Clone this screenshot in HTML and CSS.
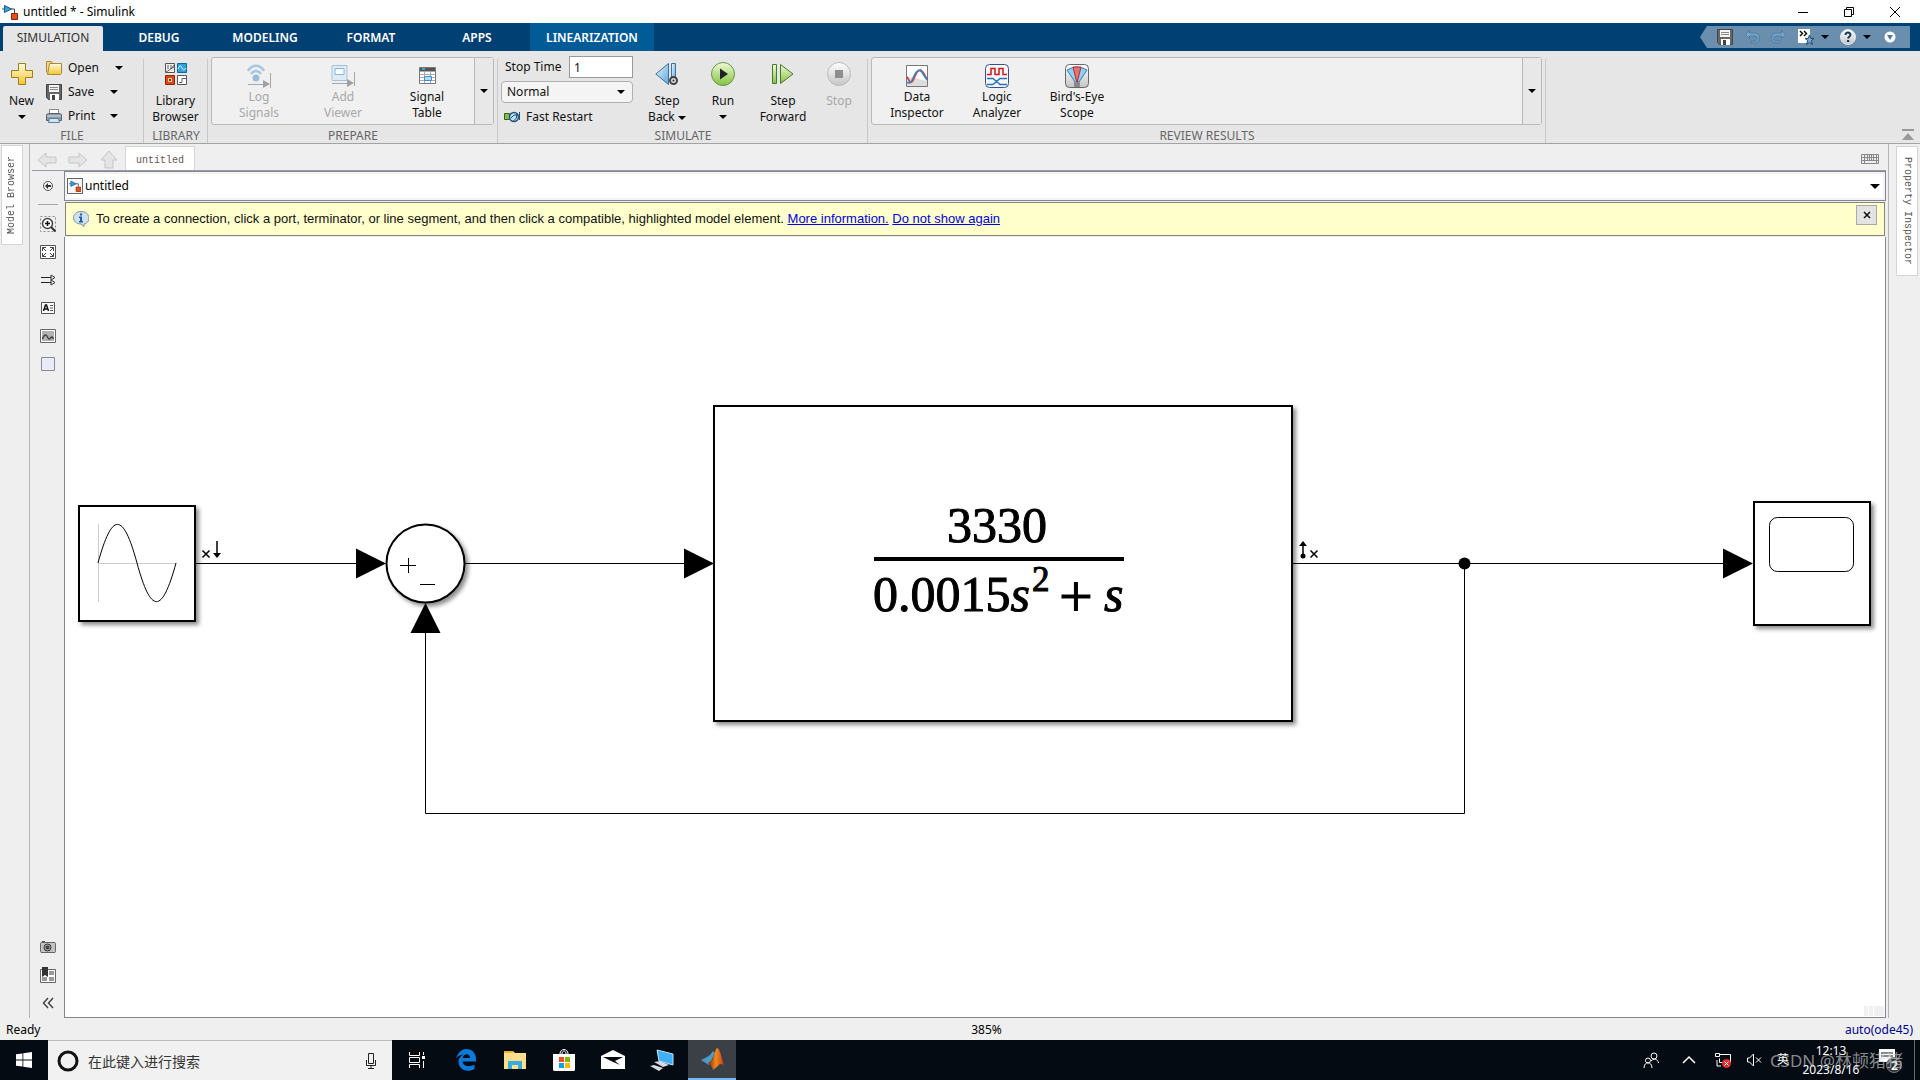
FILE: index.html
```html
<!DOCTYPE html>
<html lang="en">
<head>
<meta charset="utf-8">
<title>untitled * - Simulink</title>
<link rel="stylesheet" href="styles.css">
</head>
<body>
<svg class="defs" aria-hidden="true">
  <defs>
    <linearGradient id="gold" x1="0" y1="0" x2="0" y2="1"><stop offset="0" stop-color="#fffbe0"/><stop offset="1" stop-color="#f2c52c"/></linearGradient>
    <linearGradient id="green" x1="0" y1="0" x2="0" y2="1"><stop offset="0" stop-color="#eef9d6"/><stop offset="1" stop-color="#84c341"/></linearGradient>
    <linearGradient id="blue" x1="0" y1="0" x2="1" y2="1"><stop offset="0" stop-color="#e6f5fd"/><stop offset="1" stop-color="#5fa7d8"/></linearGradient>
    <linearGradient id="grey" x1="0" y1="0" x2="0" y2="1"><stop offset="0" stop-color="#ffffff"/><stop offset="1" stop-color="#c4c4c4"/></linearGradient>
    <linearGradient id="flame" x1="0" y1="0" x2="1" y2="0"><stop offset="0" stop-color="#7c2512"/><stop offset=".5" stop-color="#f28a1c"/><stop offset="1" stop-color="#c23a15"/></linearGradient>
    <symbol id="model" viewBox="0 0 16 16">
      <path d="M0 5h2M9 5h3.500v4" stroke="#444" fill="none"/>
      <path d="M2.500 1.500v7l7-3.500z" fill="#35a0dc" stroke="#135d92"/>
      <path d="M9.500 9.500h6v6h-6z" fill="#e2501f" stroke="#8c2506"/>
    </symbol>
    <symbol id="floppy" viewBox="0 0 16 16">
      <path d="M.5.5h15v15h-13l-2-2z" fill="#666" stroke="#444"/>
      <path d="M3 1h10v7H3z" fill="#f4f4f4"/><path d="M4 3.500h8M4 5.500h8" stroke="#888"/>
      <path d="M4 10h9v6H4z" fill="#fff"/><path d="M6 11h3v5H6z" fill="#444"/>
    </symbol>
  </defs>
</svg>

<header class="titlebar">
  <svg class="ic16" viewBox="0 0 16 16"><use href="#model"/></svg>
  <h1 class="title">untitled * - Simulink</h1>
  <div class="window-controls">
    <button aria-label="Minimize"><svg width="12" height="12"><path d="M1 6.500h10" stroke="#000"/></svg></button>
    <button aria-label="Restore"><svg width="12" height="12"><path d="M1.500 3.500h7v7h-7zM3.500 3V1.500h7v7H9" stroke="#000" fill="none"/></svg></button>
    <button aria-label="Close"><svg width="12" height="12"><path d="M1 1l10 10M11 1L1 11" stroke="#000"/></svg></button>
  </div>
</header>

<nav class="tabs">
  <button class="tab active">SIMULATION</button>
  <button class="tab">DEBUG</button>
  <button class="tab">MODELING</button>
  <button class="tab">FORMAT</button>
  <button class="tab">APPS</button>
  <button class="tab context">LINEARIZATION</button>
  <div class="quick">
    <button aria-label="Save"><svg class="ic16"><use href="#floppy"/></svg></button>
    <button aria-label="Undo"><svg class="ic16" viewBox="0 0 16 16"><path d="M5.500 1.500L1.500 5.500l4 4V7H11c3 0 3 5 0 5H7v2h4c6 0 6-10 0-10H5.500z" fill="#7ba3c3" stroke="#4c7ea6"/></svg></button>
    <button aria-label="Redo"><svg class="ic16" viewBox="0 0 16 16"><path d="M10.500 1.500l4 4-4 4V7H5c-3 0-3 5 0 5h4v2H5c-6 0-6-10 0-10h5.500z" fill="#7ba3c3" stroke="#4c7ea6"/></svg></button>
    <button class="with-caret" aria-label="Favorites"><svg class="ic16" viewBox="0 0 16 16"><path d="M0 0h12v14H0z" fill="#fff"/><path d="M2 2l2.500 2.500L2 7M6 2l2.500 2.500L6 7" stroke="#111" stroke-width="1.500" fill="none"/><path d="M11.500 6l1.300 3.400H16l-2.600 2.200 1 3.900-2.900-2.200-2.900 2.200 1-3.900L7 9.400h3.200z" fill="#7da7cd" stroke="#24496e"/></svg><i class="caret"></i></button>
    <button class="with-caret" aria-label="Help"><svg class="ic16" viewBox="0 0 16 16"><circle cx="8" cy="8" r="7.500" fill="url(#grey)" stroke="#dfe9f2"/><path d="M5.500 6c0-3.500 5.200-3 5 0-.1 1.500-2.400 1.600-2.400 3.600" fill="none" stroke="#16365a" stroke-width="2"/><path d="M7 11h2.200v2H7z" fill="#16365a"/></svg><i class="caret"></i></button>
    <button aria-label="Customize"><svg class="ic16" viewBox="0 0 16 16"><circle cx="8" cy="8" r="5.500" fill="#fff"/><path d="M5 6h6l-3 5z" fill="#4a7ba3"/></svg></button>
  </div>
</nav>

<div class="ribbon">
  <section class="group file">
    <div class="group-body">
      <button class="big new">
        <svg class="ic22" viewBox="0 0 22 22"><path d="M7.500.5h7v7h7v7h-7v7h-7v-7h-7v-7h7z" fill="url(#gold)" stroke="#a07d1a"/></svg>
        <span>New</span><i class="caret"></i>
      </button>
      <div class="file-list">
        <button class="row"><svg class="ic16" viewBox="0 0 16 16"><path d="M.5 12.500v-11h5l1 2h8v1" fill="#f2dc85" stroke="#a88a3a"/><path d="M3.500 3.500h12v10l-1 1h-13z" fill="url(#gold)" stroke="#a88a3a"/></svg><span>Open</span><i class="caret wide"></i></button>
        <button class="row"><svg class="ic16"><use href="#floppy"/></svg><span>Save</span><i class="caret"></i></button>
        <button class="row"><svg class="ic16" viewBox="0 0 16 16"><path d="M3.500 6V1.500h9V6" fill="#fff" stroke="#888"/><path d="M.5 6.500l2-1h11l2 1v6H.5z" fill="#8b98a6" stroke="#56606b"/><path d="M1 8h14" stroke="#dfe5ea"/><path d="M3.500 10.500h9l1 4h-11z" fill="#cfe6f6" stroke="#5c7f9c"/></svg><span>Print</span><i class="caret"></i></button>
      </div>
    </div>
    <h2>FILE</h2>
  </section>

  <section class="group library">
    <div class="group-body">
      <button class="big">
        <svg class="ic22" viewBox="0 0 22 22"><path d="M.5.5h9v9h-9z" fill="#eee" stroke="#555"/><path d="M3 2v4M6 2v4l3-4M1 9l8-5" stroke="#666" fill="none"/><path d="M12.500.5h9v9h-9z" fill="#2ba3dc" stroke="#12689b"/><path d="M13 6c2-5 3-3 4-1s2 3 4 0" stroke="#fff" fill="none"/><path d="M.5 12.500h9v9h-9z" fill="#d9491a" stroke="#8c2506"/><path d="M3.500 15.500h3v3h-3z" stroke="#ffd9b0" fill="#8c2506"/><path d="M12.500 12.500h9v9h-9z" fill="#fff" stroke="#555"/><path d="M14 19.500h3v-4h4" stroke="#666" fill="none"/></svg>
        <span>Library<br>Browser</span>
      </button>
    </div>
    <h2>LIBRARY</h2>
  </section>

  <section class="group prepare">
    <div class="group-body">
      <div class="gallery">
        <div class="gallery-items">
          <button class="item" disabled><svg class="ic24" viewBox="0 0 24 24"><g fill="none" stroke="#9fc4e0" stroke-width="2.500"><path d="M1 7c4-7 12-7 16 0M4 10c3-4 7-4 10 0"/></g><circle cx="9" cy="14" r="3.500" fill="#8fb8da"/><path d="M1 20.500h18M23.500 9v15" stroke="#a0a0a0"/><path d="M16 16l7 4-7 4z" fill="#999"/></svg><span>Log<br>Signals</span></button>
          <button class="item" disabled><svg class="ic24" viewBox="0 0 24 24"><path d="M1 1.500h15v15H1z" fill="#dcebf6" stroke="#a5bdd2"/><path d="M4 4.500h9v6H4z" fill="#fff" stroke="#7fafda"/><path d="M1 19.500h18M23.500 8v14" stroke="#a0a0a0"/><path d="M16 15l7 4-7 4z" fill="#999"/></svg><span>Add<br>Viewer</span></button>
          <button class="item"><svg class="ic24" viewBox="0 0 24 24"><path d="M4.500 3.500h16v16h-16z" fill="#fff" stroke="#777"/><path d="M5 4h15v3.500H5z" fill="#555"/><path d="M7 4h3v2H7z" fill="#3ba0e8"/><path d="M5 10.500h15M5 13.500h15M5 16.500h15M9.500 8v11M15.500 8v11" stroke="#aaa"/><path d="M9.500 12.500h7v4h-7z" fill="#b4dcf8" stroke="#3d8dd0"/></svg><span>Signal<br>Table</span></button>
        </div>
        <button class="gallery-more" aria-label="More apps"><i class="caret"></i></button>
      </div>
    </div>
    <h2>PREPARE</h2>
  </section>

  <section class="group simulate">
    <div class="group-body">
      <div class="sim-form">
        <div class="field"><label for="stop">Stop Time</label><input id="stop" type="text" value="1"></div>
        <div class="select-wrap"><select aria-label="Simulation mode"><option>Normal</option></select><i class="caret"></i></div>
        <button class="fast"><svg class="ic16" viewBox="0 0 16 16"><path d="M.5 4.500h5v6h-5z" fill="#7cc142" stroke="#3b5b25"/><circle cx="10" cy="8" r="4.500" fill="#bfe0f4" stroke="#23527a" stroke-width="1.500"/><path d="M15.500 3v8M12.500 5v4l-3 3M7 9l3-3h4" stroke="#23527a" fill="none"/></svg><span>Fast Restart</span></button>
      </div>
      <button class="big step"><svg class="ic24" viewBox="0 0 24 24"><path d="M13.500 1.500v21L.8 12z" fill="url(#blue)" stroke="#3d709c"/><path d="M16.500 1.500h4v18h-4z" fill="url(#blue)" stroke="#3d709c"/><circle cx="18.500" cy="18.500" r="3.500" fill="#ddd" stroke="#444" stroke-width="2"/><circle cx="18.500" cy="18.500" r="1" fill="#333"/></svg><span>Step<br>Back <i class="caret mid"></i></span></button>
      <button class="big run"><svg class="ic24" viewBox="0 0 24 24"><circle cx="12" cy="12" r="11.500" fill="url(#green)" stroke="#6a9444"/><path d="M9 6.500v11l8-5.500z" fill="#222"/></svg><span>Run</span><i class="caret"></i></button>
      <button class="big forward"><svg class="ic24" viewBox="0 0 24 24"><path d="M1.500 2.500h4v19h-4z" fill="url(#green)" stroke="#477a2a"/><path d="M9.500 2.500v19L22 12z" fill="url(#green)" stroke="#477a2a"/></svg><span>Step<br>Forward</span></button>
      <button class="big stop" disabled><svg class="ic24" viewBox="0 0 24 24"><circle cx="12" cy="12" r="11.500" fill="url(#grey)" stroke="#bbb"/><path d="M8 8h8v8H8z" fill="#8e8e8e"/></svg><span>Stop</span></button>
    </div>
    <h2>SIMULATE</h2>
  </section>

  <section class="group review">
    <div class="group-body">
      <div class="gallery">
        <div class="gallery-items">
          <button class="item"><svg class="ic24" viewBox="0 0 24 24"><path d="M1.500 1.500h21v21h-21z" fill="#fff" stroke="#777"/><path d="M2 22V12l20 5v5z" fill="#ddd"/><path d="M2 13l3 5c4 3 5-12 10-12 3 0 4 4 7 9" stroke="#d8352a" stroke-width="1.500" fill="none"/><path d="M2 18c3 3 5-1 7-6 3-6 6-8 9-2l4 6" stroke="#2f88c9" stroke-width="1.500" fill="none"/></svg><span>Data<br>Inspector</span></button>
          <button class="item"><svg class="ic24" viewBox="0 0 24 24"><rect x=".5" y=".5" width="23" height="23" rx="4" fill="#f6f7fb" stroke="#3b4f86"/><path d="M2 10.500h4v-6h4v6h4v-6h4v6h4" stroke="#d01818" stroke-width="1.500" fill="none"/><path d="M2 14.500h6l7 6h7M2 20.500h6l7-6h7" stroke="#2675b8" stroke-width="1.500" fill="none"/></svg><span>Logic<br>Analyzer</span></button>
          <button class="item"><svg class="ic24" viewBox="0 0 24 24"><rect x=".5" y=".5" width="23" height="23" rx="4" fill="url(#grey)" stroke="#666"/><path d="M2 6q10-6 20 0l-8 12h-4z" fill="#8fd0f2" stroke="#2f7fb5"/><path d="M8 3h8l-4 16z" fill="#d77" stroke="#c22"/><rect x="9" y="18" width="6" height="5" rx="1" fill="#888"/></svg><span>Bird's-Eye<br>Scope</span></button>
        </div>
        <button class="gallery-more" aria-label="More results"><i class="caret"></i></button>
      </div>
    </div>
    <h2>REVIEW RESULTS</h2>
  </section>
  <button class="collapse" aria-label="Collapse toolstrip"><svg width="12" height="12"><path d="M0 0h12v2H0zM6 4l6 7H0z" fill="#999"/></svg></button>
</div>

<main class="workspace">
  <aside class="dock left"><button class="dock-tab flip">Model Browser</button></aside>
  <div class="editor">
    <div class="doc-tabs">
      <div class="navs">
        <button class="nav" aria-label="Back"><svg width="20" height="18"><path d="M1 9l8-7v4h10v6H9v4z" fill="#e4e4e4" stroke="#c6c6c6"/></svg></button>
        <button class="nav" aria-label="Forward"><svg width="20" height="18"><path d="M19 9l-8-7v4H1v6h10v4z" fill="#e4e4e4" stroke="#c6c6c6"/></svg></button>
        <button class="nav" aria-label="Up"><svg width="20" height="18"><path d="M10 0l8 9h-4v8H6V9H2z" fill="#e4e4e4" stroke="#c6c6c6"/></svg></button>
      </div>
      <button class="doc-tab">untitled</button>
      <button class="keyboard" aria-label="Shortcuts"><svg width="18" height="10"><path d="M.5.5h17v9H.5zM0 3.500h18M0 6.500h18M3.500 0v9M6.500 0v6M8.500 0v6M10.500 0v6M12.500 0v6M15.500 0v9" stroke="#888" fill="#eee"/></svg></button>
    </div>
    <div class="editor-body">
      <div class="palette">
        <button aria-label="Hide browser"><svg class="ic16" viewBox="0 0 16 16"><circle cx="8" cy="8" r="4.500" fill="#f6f6f6" stroke="#555"/><path d="M5 8l3-3v2h3v2H8v2z" fill="#333"/></svg></button>
        <hr>
        <button aria-label="Zoom"><svg class="ic16" viewBox="0 0 16 16"><path d="M.5.5h15v15H.5z" fill="none" stroke="#888" stroke-dasharray="2 2"/><circle cx="7.500" cy="7.500" r="5" fill="#fff" stroke="#444" stroke-width="1.500"/><path d="M5 7.500h5M7.500 5v5" stroke="#111" stroke-width="1.500"/><path d="M11 11l4.500 4.500" stroke="#333" stroke-width="2"/></svg></button>
        <button aria-label="Fit to view"><svg class="ic16" viewBox="0 0 16 16"><path d="M.5 1.500h15v13H.5z" fill="#fff" stroke="#555"/><path d="M6 3.500H2.500V7M10 3.500h3.500V7M6 12.500H2.500V9M10 12.500h3.500V9M2.500 3.500L6 7M13.500 3.500L10 7M2.500 12.500L6 9M13.500 12.500L10 9" fill="none" stroke="#444"/></svg></button>
        <button aria-label="Sample time"><svg class="ic16" viewBox="0 0 16 16"><path d="M1 5.500h11M1 10.500h11" stroke="#222"/><path d="M11 3l4 2.500L11 8zM11 8l4 2.500-4 2.500z" fill="#eee" stroke="#333"/></svg></button>
        <button aria-label="Annotation"><svg class="ic16" viewBox="0 0 16 16"><path d="M1.500 2.500h13v11h-13z" fill="#fff" stroke="#555"/><path d="M3.500 11l2-6h1l2 6M4 9h4" fill="none" stroke="#111" stroke-width="1.500"/><path d="M10 5.500h3M10 8h3M10 10.500h3" stroke="#555"/></svg></button>
        <button aria-label="Image"><svg class="ic16" viewBox="0 0 16 16"><path d="M.5 1.500h15v13H.5z" fill="#fff" stroke="#666"/><path d="M2 3h12v10H2z" fill="#b2b2b2"/><path d="M2.500 11c2-6 4-4 5-2s2 3 3 1 2-1 3 1" fill="none" stroke="#444" stroke-width="1.500"/></svg></button>
        <button aria-label="Area"><svg class="ic16" viewBox="0 0 16 16"><path d="M1.500 1.500h13v13h-13z" fill="#eaeaf8" stroke="#8a8a96"/></svg></button>
        <div class="palette-gap"></div>
        <button aria-label="Screenshot"><svg class="ic16" viewBox="0 0 16 16"><path d="M1 3.500h14l.5 1v8l-.5 1H1l-.5-1v-8z" fill="#c4c4c4" stroke="#666"/><path d="M2 2.500h3" stroke="#555"/><circle cx="7.500" cy="8.500" r="3.500" fill="#aaa" stroke="#333"/><circle cx="7.500" cy="8.500" r="2" fill="#444"/></svg></button>
        <button aria-label="Bookmarks"><svg class="ic16" viewBox="0 0 16 16"><path d="M.5 2.500h15v13H.5z" fill="#fff" stroke="#666"/><path d="M9 4h5v4H9zM9 10h5v4H9zM2 10h5v4H2z" fill="#999"/><path d="M2 0h6v10L5 8l-3 2z" fill="#333"/></svg></button>
        <button aria-label="Collapse"><svg class="ic16" viewBox="0 0 16 16"><path d="M8 3L3.500 8 8 13M13 3L8.500 8l4.500 5" fill="none" stroke="#444" stroke-width="1.500"/></svg></button>
      </div>
      <div class="pane">
        <div class="address">
          <button class="crumb"><span class="crumb-icon"><svg width="12" height="12" viewBox="0 0 16 16"><use href="#model"/></svg></span>untitled</button>
          <button class="drop" aria-label="Open path list"><i class="caret"></i></button>
        </div>
        <div class="notice">
          <svg class="ic16" viewBox="0 0 16 16"><path d="M8 .5c10 0 10 11.500 3 12.500v2.500L8 13C-2 13-2 .5 8 .5z" fill="#cfe0ee" stroke="#7f93a6"/><path d="M7 2.500h2v2H7zM6 5.500h3V10h1v1.500H6V10h1V7H6z" fill="#1d5e9c"/></svg>
          <p>To create a connection, click a port, terminator, or line segment, and then click a compatible, highlighted model element. <a href="#">More information.</a> <a href="#">Do not show again</a></p>
          <button class="dismiss" aria-label="Dismiss"><svg width="8" height="8"><path d="M1 1l6 6M7 1L1 7" stroke="#111" stroke-width="1.500"/></svg></button>
        </div>
        <div class="canvas">
          <svg class="diagram">
            <g transform="translate(-65 -237)">
              <g class="wire">
                <path d="M196 563.500h160M465 563.500h219M1293 563.500h430M1464.500 563.500v250H425.500V633"/>
              </g>
              <path d="M356 548.500v30l30-15zM684 548.500v30l30-15zM1723 548.500v30l30-15zM410.500 633h30l-15-30z"/>
              <circle cx="1464.500" cy="563.500" r="6"/>

              <rect class="block" x="79" y="506" width="116" height="115"/>
              <path d="M98.500 524v78M98 563.500h78" stroke="#ccc"/>
              <path d="M98 563C112 511.500 123 511.500 137 563S162 614.500 176 563" class="thin"/>
              <path d="M202.500 550.500l7 7M209.500 550.500l-7 7M217 541v14" class="mark"/>
              <path d="M213 553h8l-4 5z"/>

              <circle class="block" cx="425.500" cy="563.500" r="39"/>
              <path d="M400 565.500h16M408.500 558v15M420 584.500h15" class="thin"/>

              <rect class="block" x="714" y="406" width="578" height="315"/>
              <path d="M874 559h250" stroke="#000" stroke-width="4"/>
              <g class="formula">
                <text x="947" y="542">3330</text>
                <text x="873" y="611">0.0015<tspan class="var">s</tspan></text>
                <text class="power" x="1032" y="591">2</text>
                <text class="plus" x="1059" y="616">+</text>
                <text class="var" x="1104" y="611">s</text>
              </g>
              <path d="M1303 545v10M1310.500 550.500l7 7M1317.500 550.500l-7 7" class="mark"/>
              <path d="M1299 546h8l-4-5z"/><circle cx="1303" cy="556" r="2.500"/>

              <rect class="block" x="1754" y="502" width="116" height="123"/>
              <rect class="screen" x="1769.500" y="517.500" width="84" height="54" rx="8"/>
            </g>
          </svg>
          <div class="grips"><i></i><i></i><i></i></div>
        </div>
      </div>
    </div>
  </div>
  <aside class="dock right"><button class="dock-tab">Property Inspector</button></aside>
</main>

<footer class="status"><span>Ready</span><span class="zoom">385%</span><a href="#" class="solver">auto(ode45)</a></footer>

<div class="taskbar">
  <button class="start" aria-label="Start"><svg class="ic16" viewBox="0 0 16 16"><path d="M0 2.300l6.500-.9v6.100H0zM7.300 1.300L16 0v7.500H7.300zM0 8.400h6.500v6.200L0 13.700zM7.300 8.400H16V16l-8.700-1.300z" fill="#fff"/></svg></button>
  <div class="search">
    <svg width="22" height="22"><circle cx="11" cy="11" r="9" fill="none" stroke="#111" stroke-width="3"/></svg>
    <input type="text" aria-label="搜索" placeholder="在此键入进行搜索">
    <svg width="12" height="18"><path d="M3.500 1.500h5v10h-5zM1.500 8v5.500h9V8M6 13.500v3M3 16.500h6" fill="none" stroke="#222"/></svg>
  </div>
  <div class="apps">
    <button aria-label="Task view"><svg class="ic24" viewBox="0 0 24 24"><path d="M4.500 4v3.500h10V4M4.500 20v-3.500h10V20M4.500 9.500h10v5h-10zM18.500 4v3M18.500 13v7" fill="none" stroke="#fff"/><path d="M17 8h3v3h-3z" fill="#fff"/></svg></button>
    <button aria-label="Edge"><svg class="ic24" viewBox="0 0 24 24"><path d="M2 11C4 4 8 1 12.500 1 18 1 22 5 22 11v2.500H8.500c.5 5 7.500 6 12 3V21c-7 4-16 1-16-7.500 0-3 2-5.500 5-7C5 7 3 9 2 11zM8.700 10H16c0-5-6.500-5-7.300 0z" fill="#0a7bdc"/></svg></button>
    <button aria-label="Explorer"><svg class="ic24" viewBox="0 0 24 24"><path d="M1 3h9l2 2h11v16H1z" fill="#ffe08a"/><path d="M1 3h9v2H1z" fill="#f0b429"/><path d="M5 21v-8h14v8h-4v-4H9v4z" fill="#3aabe0"/></svg></button>
    <button aria-label="Store"><svg class="ic24" viewBox="0 0 24 24"><path d="M8 6c0-6 8-6 8 0M10 6c0-4 4-4 4 0" fill="none" stroke="#fff"/><path d="M1 6h22v16l-1 1H2l-1-1z" fill="#fff"/><path d="M7 9h5v5H7z" fill="#f25022"/><path d="M13 9h5v5h-5z" fill="#7fba00"/><path d="M7 15h5v5H7z" fill="#00a4ef"/><path d="M13 15h5v5h-5z" fill="#ffb900"/></svg></button>
    <button aria-label="Mail"><svg class="ic24" viewBox="0 0 24 24"><path d="M0 8l12-6 12 6v13H0z" fill="#fff"/><path d="M2 9h20l-8 4 5 4-9-4z" fill="#050b12"/></svg></button>
    <button aria-label="Computer"><svg class="ic24" viewBox="0 0 24 24"><path d="M7 2l16 4v11L9 13z" fill="#3fb0f5" stroke="#bfe3f7"/><path d="M4 14l6-1 9 4-6 2zM0 18l4-1 9 3-4 3z" fill="#d5dbe0"/></svg></button>
    <button class="running" aria-label="MATLAB"><svg class="ic24" viewBox="0 0 24 24"><path d="M1 13l6-3 3-2 3-4 2 2-6 12z" fill="#4b9ac7"/><path d="M8 16l4-3c2-3 3-11 5-12 3 0 4 9 7 17-3-2-5-1-6 1l-5 4c-1-4-3-6-5-7z" fill="url(#flame)"/></svg></button>
  </div>
  <div class="tray">
    <button class="people" aria-label="People"><svg class="ic16" viewBox="0 0 16 16"><g fill="none" stroke="#fff"><circle cx="11" cy="4" r="3"/><circle cx="5" cy="8.500" r="2.500"/><path d="M1 16c0-7 8-7 8 0M8 9c3-3 7-2 7.500 2"/></g></svg></button>
    <button class="more" aria-label="Hidden icons"><svg class="ic16" viewBox="0 0 16 16"><path d="M2 11l6-6 6 6" fill="none" stroke="#fff" stroke-width="1.500"/></svg></button>
    <button class="net" aria-label="Network"><svg class="ic16" viewBox="0 0 16 16"><path d="M2 8v6h4M5 2.500h10.500v8H4.500v-4M.5 1.500h4v3h-4z" fill="none" stroke="#fff"/><circle cx="11.500" cy="11.500" r="4.500" fill="#e02b2b"/><path d="M9.500 9.500l4 4M13.500 9.500l-4 4" stroke="#fff"/></svg></button>
    <button class="vol" aria-label="Volume"><svg class="ic16" viewBox="0 0 16 16"><path d="M1.500 6h2l4-4v12l-4-4h-2zM10 5.500l5 5M15 5.500l-5 5" fill="none" stroke="#fff"/></svg></button>
    <button class="ime">英</button>
    <time class="clock">12:13<br>2023/8/16</time>
    <button class="inbox" aria-label="Notifications"><svg width="24" height="26"><path d="M1 2h16v13h-4v3l-4-3H1z" fill="#fff"/><path d="M3 6h12M3 9h12" stroke="#050b12"/><circle cx="16" cy="18" r="7.500" fill="#2f3338" stroke="#777"/><text x="13" y="23" class="count">2</text></svg></button>
    <span class="watermark">CSDN @林顿猪猪</span>
  </div>
</div>
</body>
</html>
```
FILE: styles.css
```css
* { box-sizing: border-box; }
body {
  margin: 0;
  min-height: 100vh;
  display: flex;
  flex-direction: column;
  background: #efefef;
  color: #111;
  font: 12px/16px "Noto Sans", "Noto Sans CJK SC", sans-serif;
}
button, input, select { font: inherit; color: inherit; margin: 0; padding: 0; border: 0; background: none; }
button { display: flex; align-items: center; justify-content: center; }
button:disabled { color: #a8a8a8; }
h1, h2, p { margin: 0; font-size: 12px; font-weight: 400; }
svg { display: block; flex: none; }
.defs { position: absolute; width: 0; height: 0; }
.ic16 { width: 16px; height: 16px; }
.ic22 { width: 22px; height: 22px; }
.ic24 { width: 24px; height: 24px; }
.caret { display: inline-block; flex: none; border: 4px solid transparent; border-top: 4px solid #000; border-bottom: 0; }
.caret.mid { vertical-align: middle; }

/* Title bar */
.titlebar { display: flex; align-items: center; height: 23px; padding: 0 2px; gap: 5px; background: #fff; }
.title { flex: 1; color: #000; }
.window-controls { display: flex; }
.window-controls button { width: 46px; height: 20px; }

/* Toolstrip tabs */
.tabs { display: flex; height: 28px; background: #004073; }
.tab { width: 106px; padding-top: 2px; color: #fff; font-weight: 600; }
.tab.active { width: 100px; margin: 3px 3px 0; padding: 0 0 2px; border-radius: 2px 2px 0 0; background: #e6e6e6; color: #333; font-weight: 400; }
.tab.context { width: 124px; background: #005b97; }
.quick {
  display: flex; align-items: center; gap: 11px;
  height: 22px; margin: 3px 10px 0 auto; padding: 0 12px 0 17px;
  background: #6a8fae;
  clip-path: polygon(0 50%, 7px 0, 100% 0, 100% 100%, 7px 100%);
}
.quick .with-caret { gap: 7px; }

/* Toolstrip */
.ribbon { display: flex; height: 93px; background: #e6e6e6; border-bottom: 1px solid #a3a3a3; }
.group { display: flex; flex-direction: column; background: linear-gradient(#c8c8c8, #c8c8c8) right bottom / 1px 84px no-repeat; }
.group-body { flex: none; display: flex; height: 77px; }
.group h2 { text-align: center; color: #666; line-height: 15px; }
.file { width: 144px; }
.library { width: 64px; }
.prepare { width: 290px; }
.simulate { width: 370px; }
.review { width: 678px; }
.big { flex-direction: column; justify-content: flex-start; padding-top: 12px; gap: 8px; }
.big .ic24 { margin: -1px 0; }
.big > .caret { margin-top: -2px; }
.big span { text-align: center; }
.new { width: 43px; }
.library .big { width: 63px; }
.step { width: 56px; margin-left: 6px; }
.run { width: 56px; }
.forward { width: 64px; }
.stop { width: 48px; }
.file-list { display: flex; flex-direction: column; padding: 5px 0 0 3px; }
.row { height: 24px; gap: 6px; justify-content: flex-start; }
.row span { width: 36px; text-align: left; }
.row .wide { margin-left: 5px; }
.gallery { flex: 1; display: flex; height: 68px; margin: 6px 4px 0 3px; border: 1px solid #b9b9b9; border-radius: 3px; background: #f0f0f0; }
.gallery-items { flex: 1; display: flex; padding-left: 5px; }
.item { width: 84px; flex-direction: column; justify-content: flex-start; padding-top: 6px; gap: 1px; }
.item:disabled .ic24 { opacity: .9; }
.review .item { width: 80px; }
.gallery-more { width: 19px; border-left: 1px solid #b9b9b9; background: #e8e8e8; }
.sim-form { display: flex; flex-direction: column; gap: 3px; width: 135px; padding: 5px 0 0 3px; }
.field { display: flex; align-items: center; justify-content: space-between; padding-left: 4px; }
.field input { width: 64px; height: 22px; padding-left: 4px; border: 1px solid #999; background: #fff; }
.select-wrap { display: grid; align-items: center; height: 22px; }
.select-wrap select { grid-area: 1 / 1; height: 22px; appearance: none; padding-left: 5px; border: 1px solid #b0b0b0; border-radius: 4px; background: #f4f4f4; }
.select-wrap .caret { grid-area: 1 / 1; justify-self: end; margin-right: 8px; }
.fast { height: 22px; padding-left: 3px; gap: 6px; justify-content: flex-start; }
.collapse { align-self: flex-end; margin: 0 6px 2px auto; }

/* Workspace */
.workspace { flex: 1; display: flex; }
.dock { display: flex; align-items: flex-start; padding-top: 1px; }
.dock.left { width: 30px; padding-left: 1px; border-right: 1px solid #b4b4b8; }
.dock.right { width: 32px; padding: 2px 0 0 7px; border-left: 1px solid #b4b4b8; }
.dock-tab { width: 22px; padding: 10px 0; border: 1px solid #d4d4d4; background: #fff; color: #555; font: 10px/20px "Liberation Mono", monospace; writing-mode: vertical-rl; }
.flip { transform: rotate(180deg); }
.editor { flex: 1; display: flex; flex-direction: column; padding: 0 2px 0 2px; }
.doc-tabs { display: flex; align-items: center; height: 27px; padding: 2px 7px 0 5px; border-bottom: 1px solid #9a9aa2; }
.navs { display: flex; gap: 11px; width: 88px; padding-top: 3px; }
.nav { width: 20px; }
.doc-tab { align-self: stretch; width: 70px; padding-top: 4px; border: 1px solid #d4d4d4; border-bottom: 0; background: #fff; color: #6b5555; font: 10px/20px "Liberation Mono", monospace; }
.keyboard { margin-left: auto; padding-top: 2px; }
.editor-body { flex: 1; display: flex; }
.palette { width: 32px; display: flex; flex-direction: column; align-items: center; gap: 12px; padding: 7px 0; }
.palette hr { width: 20px; margin: -2px 0 -1px; border: 0; border-top: 1px solid #aaa; }
.palette-gap { flex: 1; }
.pane { flex: 1; display: flex; flex-direction: column; }
.address { display: flex; align-items: center; justify-content: space-between; height: 30px; padding: 0 5px 0 2px; border: 1px solid #84868f; background: #fff; box-shadow: inset 0 0 0 2px #f3f3f3; }
.crumb { gap: 2px; color: #000; }
.crumb-icon { display: grid; place-items: center; width: 16px; height: 16px; border: 1px solid #666; background: #f6f6f6; }
.drop .caret { border-width: 5px 5px 0; }
.notice { display: flex; align-items: center; gap: 7px; height: 34px; margin: 1px; padding: 0 7px; border: 1px solid #84847c; background: #ffffcc; font: 13px/16px "Liberation Sans", Arial, sans-serif; }
.notice p { flex: 1; font: inherit; }
.notice a { color: #0000e0; }
.dismiss { align-self: flex-start; width: 21px; height: 20px; margin-top: 2px; border: 1px solid #a9a9a9; background: #e3e3e3; }
.canvas { flex: 1; display: grid; border: 1px solid #84868f; border-top: 0; background: #fff; }
.diagram { grid-area: 1 / 1; width: 100%; height: 100%; }
.wire { fill: none; stroke: #000; }
.block { fill: #fff; stroke: #000; stroke-width: 2; filter: drop-shadow(3px 3px 2px rgba(0, 0, 0, .45)); }
.thin, .screen { fill: none; stroke: #000; }
.mark { fill: none; stroke: #000; stroke-width: 1.5; }
.formula { font: 50px "Liberation Serif", serif; stroke: #000; }
.var { font-style: italic; }
.formula .power { font-size: 35px; }
.formula .plus { font-size: 60px; }
.grips { grid-area: 1 / 1; place-self: end; display: flex; gap: 1px; padding: 1px; }
.grips i { width: 4px; height: 10px; background: #f0f0f0; }
.grips i:last-child { width: 10px; }

/* Status bar */
.status { display: grid; grid-template-columns: 1fr auto 1fr; height: 22px; padding: 4px 7px 0 6px; color: #000; }
.zoom { padding-left: 54px; }
.solver { justify-self: end; color: #00008b; text-decoration: none; }

/* Taskbar */
.taskbar { display: flex; height: 40px; background: #050b12; color: #fff; }
.start { width: 48px; }
.search { display: flex; align-items: center; gap: 9px; width: 344px; padding: 0 15px 0 9px; border-top: 1px solid #bbb; background: #f1f1f1; }
.search input { flex: 1; min-width: 0; font: 14px/20px "Noto Sans CJK SC", sans-serif; outline: 0; }
.search input::placeholder { color: #333; opacity: 1; }
.apps { display: flex; }
.apps button { width: 49px; }
.apps .running { width: 48px; margin-left: 2px; background: #3b4046; border-bottom: 2px solid #76b9ed; }
.tray { position: relative; display: flex; align-items: center; margin-left: auto; padding-right: 5px; }
.people { width: 40px; }
.more { width: 36px; }
.net, .vol { width: 31px; }
.ime { width: 28px; }
.clock { width: 68px; text-align: center; line-height: 19px; }
.inbox { width: 50px; height: 40px; border-right: 1px solid #666; }
.count { fill: #fff; font-size: 12px; font-weight: 600; }
.watermark { position: absolute; right: 17px; top: 10px; font: 17px/22px "Noto Sans", "Noto Sans CJK SC", sans-serif; color: rgba(210, 210, 210, .65); white-space: nowrap; }
```
